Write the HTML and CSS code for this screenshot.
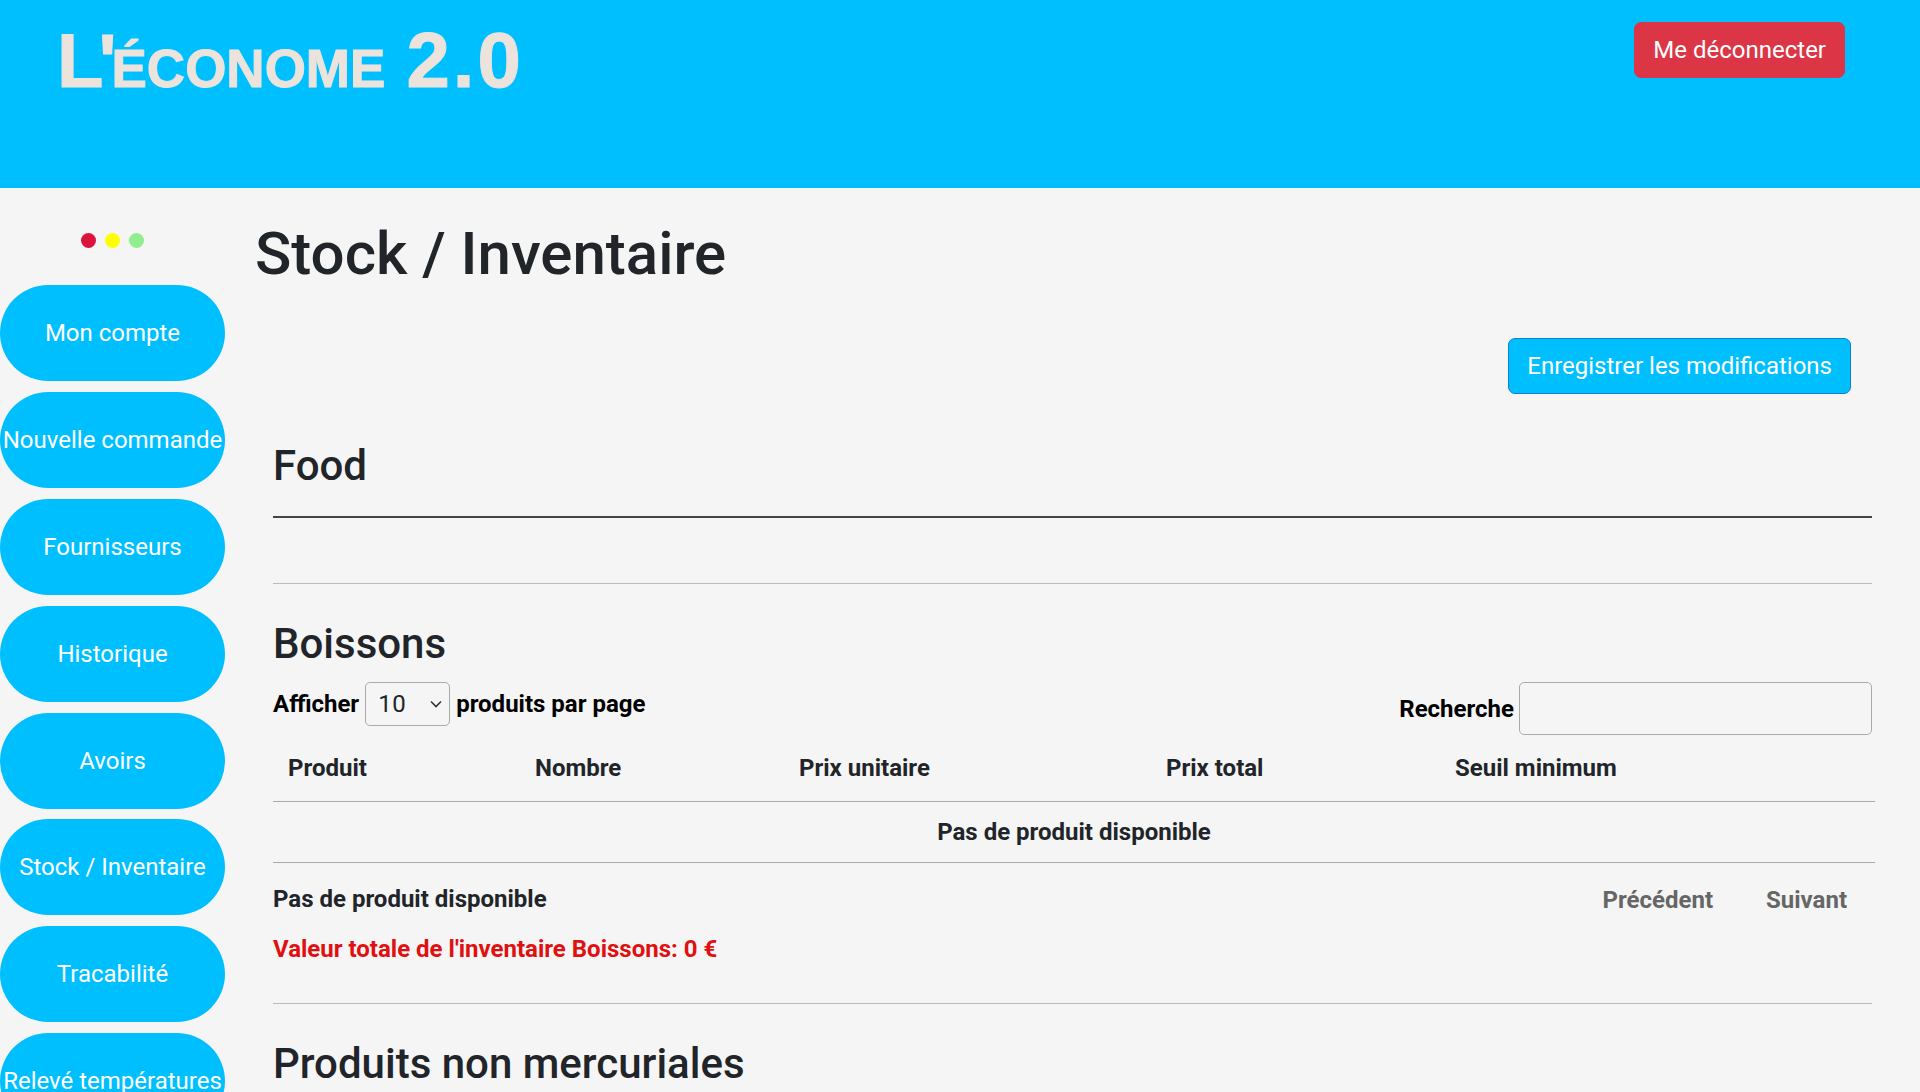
FILE: index.html
```html
<!DOCTYPE html>
<html lang="fr">
<head>
    <meta charset="utf-8">
    <title>L'Économe 2.0 - Stock / Inventaire</title>
    <link rel="stylesheet" href="styles.css">
</head>
<body>
    <header class="topbar">
        <div class="logo"><span class="logo-first">L'</span><span class="logo-caps">Économe</span> <span class="logo-num">2.0</span></div>
        <a class="btn btn-logout" href="#">Me déconnecter</a>
    </header>

    <div class="page">
        <nav class="sidebar">
            <div class="dots">
                <span class="dot dot-red"></span>
                <span class="dot dot-yellow"></span>
                <span class="dot dot-green"></span>
            </div>
            <a class="pill" href="#">Mon compte</a>
            <a class="pill" href="#">Nouvelle commande</a>
            <a class="pill" href="#">Fournisseurs</a>
            <a class="pill" href="#">Historique</a>
            <a class="pill" href="#">Avoirs</a>
            <a class="pill" href="#">Stock / Inventaire</a>
            <a class="pill" href="#">Tracabilité</a>
            <a class="pill" href="#">Relevé températures</a>
        </nav>

        <main class="content">
            <h1 class="page-title">Stock / Inventaire</h1>
            <div class="save-row">
                <button class="btn btn-save">Enregistrer les modifications</button>
            </div>

            <section class="category">
                <h2 class="food-title">Food</h2>
                <hr class="rule-dark">
                <hr class="rule-light rule-food">

                <h2 class="cat-title">Boissons</h2>
                <div class="table-tools">
                    <label class="tool-left">Afficher
                        <select class="page-size">
                            <option>10</option>
                        </select>
                        produits par page</label>
                    <label class="tool-right">Recherche <input class="search" type="text"></label>
                </div>

                <table class="stock-table">
                    <thead>
                        <tr>
                            <th class="col-product">Produit</th>
                            <th class="col-count">Nombre</th>
                            <th class="col-unit">Prix unitaire</th>
                            <th class="col-total">Prix total</th>
                            <th>Seuil minimum</th>
                        </tr>
                    </thead>
                    <tbody>
                        <tr>
                            <td colspan="5">Pas de produit disponible</td>
                        </tr>
                    </tbody>
                </table>

                <div class="table-foot">
                    <span class="foot-info">Pas de produit disponible</span>
                    <span class="pager">
                        <a class="pager-link" href="#">Précédent</a>
                        <a class="pager-link" href="#">Suivant</a>
                    </span>
                </div>
                <p class="total-value">Valeur totale de l'inventaire Boissons: 0 €</p>
                <hr class="rule-light rule-total">

                <h2 class="cat-title">Produits non mercuriales</h2>
            </section>
        </main>
    </div>
</body>
</html>
```

FILE: styles.css
```css
html, body {
    height: 1092px;
    overflow: hidden;
}

body {
    margin: 0;
    background-color: #f5f5f5;
    color: #212529;
    font-family: Roboto, "Liberation Sans", sans-serif;
    font-size: 24px;
}

a {
    text-decoration: none;
}

.topbar {
    height: 188px;
    box-sizing: border-box;
    background-color: #00bfff;
    display: flex;
    justify-content: space-between;
    align-items: flex-start;
    padding: 22px 75px 0 57px;
}

.logo {
    color: #ebe3dc;
    font-family: "Liberation Sans", sans-serif;
    font-weight: bold;
    font-size: 76px;
    line-height: 76px;
    white-space: nowrap;
    -webkit-text-stroke: 1px #ebe3dc;
}

.logo-first {
    letter-spacing: -5px;
}

.logo-caps {
    font-size: 53px;
    text-transform: uppercase;
}

.logo-num {
    letter-spacing: 3px;
    font-size: 78px;
}

.btn {
    display: inline-block;
    color: #fff;
    font-family: inherit;
    font-size: 24px;
    line-height: 36px;
    padding: 9px 18px;
    border: 1px solid transparent;
    border-radius: 7px;
}

.btn-logout {
    background-color: #dc3545;
    border-color: #dc3545;
}

.btn-save {
    background-color: #00bfff;
    border-color: #0d7fd8;
}

.page {
    display: flex;
}

.sidebar {
    width: 225px;
    flex: none;
    display: flex;
    flex-direction: column;
    gap: 10.9px;
}

.dots {
    display: flex;
    justify-content: center;
    gap: 9px;
    padding: 45px 0 37px;
    margin-bottom: -10.9px;
}

.dot {
    width: 15px;
    height: 15px;
    border-radius: 50%;
}

.dot-red {
    background-color: #dc143c;
}

.dot-yellow {
    background-color: #ffff00;
}

.dot-green {
    background-color: #90ee90;
}

.pill {
    height: 96px;
    flex: none;
    display: flex;
    align-items: center;
    justify-content: center;
    background-color: #00bfff;
    color: #fff;
    border-radius: 48px;
    white-space: nowrap;
}

.content {
    flex: 1;
    padding: 0 48px 0 30px;
    min-width: 0;
}

.page-title {
    margin: 30px 0 0;
    font-size: 60px;
    font-weight: 500;
    line-height: 72px;
}

.save-row {
    display: flex;
    justify-content: flex-end;
    padding: 48px 21px 0 0;
}

.category {
    padding-left: 18px;
}

.food-title {
    margin: 47px 0 0;
    font-size: 42px;
    font-weight: 500;
    line-height: 50px;
}

.cat-title {
    margin: 0;
    font-size: 42px;
    font-weight: 500;
    line-height: 50px;
}

hr {
    margin: 0;
    border: 0;
    height: 1px;
}

.rule-dark {
    margin-top: 25px;
    background-color: #444;
    height: 2px;
}

.rule-light {
    background-color: #bbb;
}

.rule-food {
    margin: 65px 0 35px;
}

.table-tools {
    display: flex;
    justify-content: space-between;
    color: #000;
    font-weight: 700;
    margin-top: 13px;
}

.tool-left {
    display: flex;
    align-items: center;
    gap: 6px;
    height: 44px;
}

.tool-right {
    display: flex;
    align-items: center;
    gap: 5px;
}

.page-size {
    appearance: none;
    width: 85px;
    height: 44px;
    box-sizing: border-box;
    padding-left: 12px;
    font-family: inherit;
    font-size: 24px;
    letter-spacing: 0.5px;
    color: #212529;
    background: #f5f5f5 url("data:image/svg+xml,%3Csvg xmlns='http://www.w3.org/2000/svg' width='12' height='8' viewBox='0 0 12 8'%3E%3Cpath d='M1 1.5l5 5 5-5' fill='none' stroke='%23333' stroke-width='1.6'/%3E%3C/svg%3E") no-repeat right 7px center;
    border: 1px solid #aaa;
    border-radius: 5px;
}

.search {
    width: 353px;
    height: 53px;
    box-sizing: border-box;
    background-color: #f5f5f5;
    border: 1px solid #aaa;
    border-radius: 5px;
}

.stock-table {
    width: 1602px;
    border-collapse: collapse;
    table-layout: fixed;
    margin-top: 1px;
}

.stock-table th {
    text-align: left;
    font-weight: 700;
    padding: 0 15px 2px;
    height: 63px;
    border-bottom: 1px solid #aaa;
}

.stock-table td {
    text-align: center;
    font-weight: 700;
    height: 60px;
    padding: 0;
    border-bottom: 1px solid #aaa;
}

.col-product {
    width: 217px;
}

.col-count {
    width: 234px;
}

.col-unit {
    width: 337px;
}

.col-total {
    width: 259px;
}

.table-foot {
    display: flex;
    justify-content: space-between;
    align-items: center;
    width: 1602px;
    height: 72px;
    font-weight: 700;
}

.pager {
    display: flex;
    gap: 53px;
    padding: 2px 28px 0 0;
}

.pager-link {
    color: #666;
}

.total-value {
    margin: 0;
    color: #e01010;
    font-weight: 700;
    line-height: 28px;
}

.rule-total {
    margin: 40px 0 35px;
}
```
